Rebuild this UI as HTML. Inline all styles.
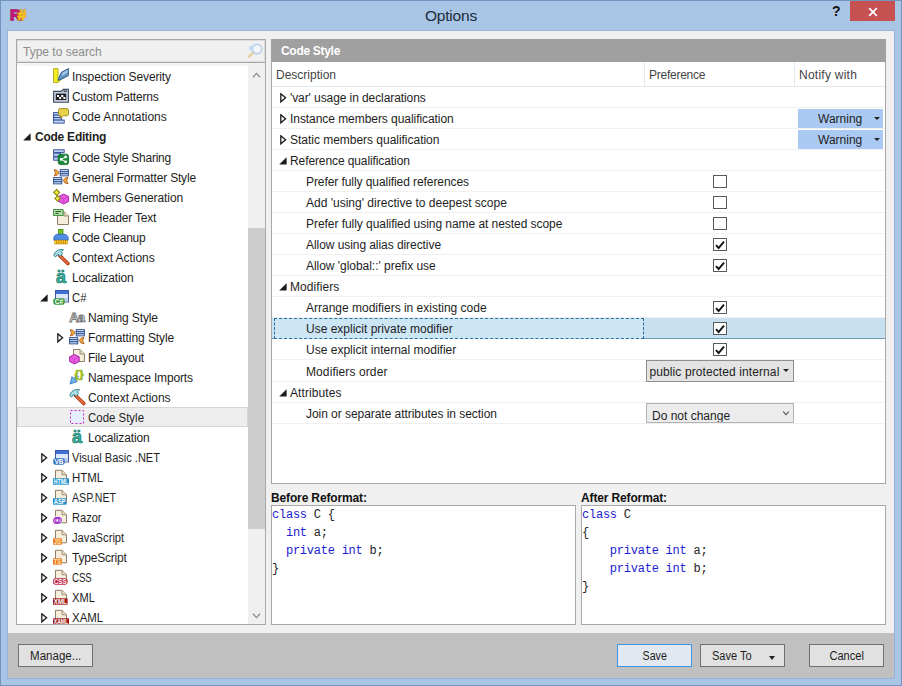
<!DOCTYPE html>
<html><head><meta charset="utf-8"><title>Options</title>
<style>
html,body{margin:0;padding:0;}
body{width:902px;height:686px;overflow:hidden;background:#a9c5e5;font-family:"Liberation Sans",sans-serif;font-size:12px;color:#1e1e1e;}
#win{position:relative;width:902px;height:686px;background:#a9c5e5;box-shadow:inset 0 0 0 1px #6f94bd;overflow:hidden;}
#titlebar{position:absolute;left:0;top:0;width:902px;height:31px;}
#logo{position:absolute;left:10px;top:4.5px;font-weight:bold;font-size:15.5px;letter-spacing:-3.6px;line-height:20px;paint-order:stroke fill;}
#logo .lr{color:#c9187a;-webkit-text-stroke:1.3px #a0125c;}
#logo .lh{color:#f7c624;-webkit-text-stroke:1.3px #d89a18;}
#title{position:absolute;left:0;width:902px;top:6px;text-align:center;font-size:15.5px;line-height:20px;color:#1c2a3a;letter-spacing:-0.2px;}
#help{position:absolute;left:832px;top:3px;font-weight:bold;font-size:14px;line-height:16px;color:#111;}
#close{position:absolute;left:850px;top:1px;width:45px;height:20px;background:#c75050;}
#close svg{position:absolute;left:18px;top:5.6px;}
#contentbg{position:absolute;left:8px;top:31px;width:886px;height:602px;background:#f0f0f0;}
#frame{position:absolute;left:7px;top:30px;width:888px;height:649px;box-sizing:border-box;border:1px solid #97b4d6;}
#bar{position:absolute;left:8px;top:633px;width:886px;height:45px;background:#c0c0c0;}
#content{position:absolute;left:0;top:0;width:902px;height:686px;}
#search{position:absolute;left:16px;top:39px;width:250px;height:24px;box-sizing:border-box;border:1px solid #a8a8a8;background:#f0f0f0;box-shadow:inset 0 0 0 1px #dcdcdc;}
#ph{position:absolute;left:6px;top:4px;line-height:16px;color:#8c8c8c;}
#search svg{position:absolute;left:229px;top:3px;}
#tree{position:absolute;left:16px;top:62px;width:250px;height:563px;box-sizing:border-box;border:1px solid #a8a8a8;background:#fff;overflow:hidden;}
#treeinner{position:absolute;left:0;top:0;width:231px;height:561px;overflow:hidden;}
.trow{position:absolute;left:0;width:231px;height:20px;}
.trow.sel{background:#eeeeee;box-shadow:inset 0 0 0 1px #d6d6d6;}
.tt{position:absolute;top:3px;line-height:16px;white-space:nowrap;}
.ico{position:absolute;top:2px;width:16px;height:16px;}
.ico svg{display:block;overflow:visible;}
.arw{position:absolute;line-height:0;}
#sb{position:absolute;left:231px;top:0;width:17px;height:561px;background:#f0f0f0;}
#thumb{position:absolute;left:0;top:165px;width:17px;height:301px;background:#cdcdcd;}
#band{position:absolute;left:0;top:0;width:231px;height:3px;background:#f4f4f4;}
#hdr{position:absolute;left:271px;top:39px;width:615px;height:23px;z-index:2;background:#a0a0a0;color:#fff;font-weight:bold;}
#hdr span{position:absolute;left:10px;top:4px;line-height:16px;letter-spacing:-0.3px;}
#table{position:absolute;left:271px;top:61px;width:615px;height:423px;box-sizing:border-box;border:1px solid #a8a8a8;border-top-color:#a0a0a0;background:#fff;overflow:hidden;}
#thead{position:absolute;left:0;top:0;width:613px;height:25px;border-bottom:1px solid #e4e9ef;box-sizing:border-box;}
.th{position:absolute;top:5px;line-height:16px;color:#444;white-space:nowrap;}
.vs{position:absolute;top:0;width:1px;height:24px;background:#e4e9ef;}
.r{position:absolute;left:0;width:613px;box-sizing:border-box;border-bottom:1px solid #f0f0f0;}
.r.rsel{background:#c8e1f0;border-bottom-color:#6f9db5;}
.rt{position:absolute;top:3px;line-height:16px;white-space:nowrap;}
.focus{position:absolute;left:2px;top:0;width:370px;height:21px;box-sizing:border-box;border:1px dashed #2d6f9f;background:#cce6f6;}
.cb{position:absolute;left:441px;top:4px;width:14px;height:13px;box-sizing:border-box;border:1px solid #5a5a5a;background:#fff;}
.cb svg{left:-1px !important;top:-1px !important;}
.warn{position:absolute;left:526px;top:1px;width:85px;height:19px;background:#aacaf4;}
.wt{position:absolute;left:20px;top:2px;line-height:16px;}
.wa{position:absolute;left:76px;top:8px;width:0;height:0;border-left:3.2px solid transparent;border-right:3.2px solid transparent;border-top:3.4px solid #222;}
.combo1{position:absolute;left:374px;top:0;width:148px;height:22px;box-sizing:border-box;border:1px solid #8e8e8e;background:#e3e3e3;}
.ct{position:absolute;left:2.5px;top:3px;line-height:16px;white-space:nowrap;letter-spacing:0.1px;}
.combo2{position:absolute;left:374px;top:0;width:148px;height:20px;box-sizing:border-box;border:1px solid #b4b4b4;background:#ececec;overflow:hidden;}
.ct2{position:absolute;left:5px;top:4px;line-height:16px;white-space:nowrap;}
.lbl{position:absolute;top:490px;line-height:16px;font-weight:bold;color:#111;white-space:nowrap;letter-spacing:-0.14px;}
.codebox{position:absolute;top:505px;height:118px;border:1px solid #a8a8a8;background:#fff;font-family:"Liberation Mono",monospace;font-size:12px;letter-spacing:-0.24px;color:#222;}
.cl{position:relative;left:0px;top:0px;height:18px;line-height:18px;white-space:pre;}
.k{color:#1c1cd0;}
.btn{position:absolute;top:11px;height:23px;box-sizing:border-box;border:1px solid #707070;background:#e1e1e1;text-align:center;line-height:22px;white-space:nowrap;}
.btn span{line-height:22px;}
.bt{display:inline-block;}
.btn.def{border-color:#3c96e8;background:#e1e8f0;}
#bar .wa{position:absolute;}

</style></head>
<body>
<div id="win">
 <div id="titlebar">
  <span id="logo"><span class="lr">R</span><span class="lh">#</span></span>
  <span id="title">Options</span>
  <span id="help">?</span>
  <span id="close"><svg width="10" height="10" viewBox="0 0 10 10"><path d="M1.2 1.2L8.8 8.8M8.8 1.2L1.2 8.8" stroke="#fff" stroke-width="1.7"/></svg></span>
 </div>
 <div id="frame"></div><div id="contentbg"></div>
 <div id="content">
  <div id="search"><span id="ph">Type to search</span><svg width="18" height="16" viewBox="0 0 18 16"><path d="M7.2 9.3L3 13.6" stroke="#e6d19c" stroke-width="2.6" stroke-linecap="round"/><circle cx="11" cy="6" r="4.7" fill="#f2f6fb" stroke="#bdd3ea" stroke-width="1.7"/><circle cx="5.3" cy="5.2" r="2.2" fill="#c3daf3"/></svg></div>
  <div id="tree">
   <div id="treeinner"><div id="band"></div>
<div class="trow" style="top:3px"><span class="ico" style="left:36px"><svg width="16" height="16" viewBox="0 0 16 16"><path d="M0.6 0.6H5V9.8L7.6 12.2L5.2 14.6H0.6Z" fill="#f6ee22" stroke="#b5ab1e" stroke-width="1"/><path d="M4.6 12.4L8.4 4.2L15.4 0.6V7.6L8.6 11.2Z" fill="#5b93c4" stroke="#2f5478" stroke-width="0.9"/><path d="M9.5 4.8L14.6 1.8V4.5L8.6 8.2Z" fill="#a9c8e4"/></svg></span><span class="tt" id="t0" style="left:55px;letter-spacing:-0.131px;">Inspection Severity</span></div>
<div class="trow" style="top:23px"><span class="ico" style="left:36px"><svg width="16" height="16" viewBox="0 0 16 16"><path d="M0.6 3.4H8.2L10.2 1.4H15.4V14.2H0.6Z" fill="#c4cfde" stroke="#3f4b60" stroke-width="1.1"/><rect x="2.8" y="5.6" width="10.4" height="6.4" fill="#1d1d22"/><rect x="4" y="7" width="2.1" height="2" fill="#fff"/><rect x="8.2" y="7" width="2.1" height="2" fill="#fff"/><rect x="6.1" y="9" width="2.1" height="2" fill="#fff"/><rect x="10.3" y="9" width="2.1" height="2" fill="#fff"/><path d="M10.5 3.2H14" stroke="#2a3242" stroke-width="1.2"/></svg></span><span class="tt" id="t1" style="left:55px;letter-spacing:-0.185px;">Custom Patterns</span></div>
<div class="trow" style="top:43px"><span class="ico" style="left:36px"><svg width="16" height="16" viewBox="0 0 16 16"><rect x="0.6" y="4.6" width="5" height="2.5" fill="#bfd8f8" stroke="#2b4590" stroke-width="0.9"/><rect x="0.6" y="7.1" width="6.5" height="2.5" fill="#bfd8f8" stroke="#2b4590" stroke-width="0.9"/><rect x="0.6" y="9.6" width="8" height="2.5" fill="#bfd8f8" stroke="#2b4590" stroke-width="0.9"/><rect x="0.6" y="12.1" width="10.6" height="3" fill="#bfd8f8" stroke="#2b4590" stroke-width="0.9"/><path d="M7 0.6H14Q15.5 0.6 15.5 2.2V6.2Q15.5 7.8 14 7.8H10.5L7.4 10.6L8 7.8H7Q5.5 7.8 5.5 6.2V2.2Q5.5 0.6 7 0.6Z" fill="#e8d24a" stroke="#9d8a28" stroke-width="0.9"/></svg></span><span class="tt" id="t2" style="left:55px;letter-spacing:0.003px;">Code Annotations</span></div>
<div class="trow" style="top:63px"><span class="arw" style="left:6px;top:7px"><svg class="ar" width="8" height="8" viewBox="0 0 8 8"><path d="M7.6 0.2V7.6H0.2Z" fill="#1a1a1a"/></svg></span><span class="tt" id="t3" style="font-weight:bold;left:18px;letter-spacing:-0.242px;">Code Editing</span></div>
<div class="trow" style="top:84px"><span class="ico" style="left:36px"><svg width="16" height="16" viewBox="0 0 16 16"><rect x="0.6" y="0.8" width="10.6" height="2.6" fill="#bfd8f8" stroke="#2b4590" stroke-width="0.9"/><rect x="0.6" y="4.2" width="7" height="3" fill="#bfd8f8" stroke="#2b4590" stroke-width="0.9"/><rect x="0.6" y="8.2" width="5" height="3" fill="#bfd8f8" stroke="#2b4590" stroke-width="0.9"/><rect x="5.2" y="5.2" width="10.4" height="10.4" rx="2.4" fill="#1a8a3c" stroke="#0f6a2a" stroke-width="0.8"/><path d="M8.2 10.4L12.6 8M8.2 10.4L12.6 12.8" stroke="#fff" stroke-width="1"/><circle cx="8.2" cy="10.4" r="1.4" fill="#fff"/><circle cx="12.6" cy="8" r="1.4" fill="#fff"/><circle cx="12.6" cy="12.8" r="1.4" fill="#fff"/></svg></span><span class="tt" id="t4" style="left:55px;letter-spacing:-0.250px;">Code Style Sharing</span></div>
<div class="trow" style="top:104px"><span class="ico" style="left:36px"><svg width="16" height="16" viewBox="0 0 16 16"><path d="M1.2 0.8C4.2 0.8 5.6000000000000005 2.3 5.6000000000000005 3.8C5.6000000000000005 5.3 4.2 6.8 1.2 6.8Q3.8 3.8 1.2 0.8Z" fill="#f5a838" stroke="#a85a18" stroke-width="0.9"/><rect x="7.2" y="0.6" width="8.2" height="2.1" fill="#c9dcf6" stroke="#2b4a8a" stroke-width="0.9"/><rect x="7.2" y="2.7" width="8.2" height="2.1" fill="#c9dcf6" stroke="#2b4a8a" stroke-width="0.9"/><rect x="7.2" y="4.8" width="8.2" height="2.1" fill="#c9dcf6" stroke="#2b4a8a" stroke-width="0.9"/><rect x="0.6" y="8.6" width="8.2" height="2.1" fill="#c9dcf6" stroke="#2b4a8a" stroke-width="0.9"/><rect x="0.6" y="10.7" width="8.2" height="2.1" fill="#c9dcf6" stroke="#2b4a8a" stroke-width="0.9"/><rect x="0.6" y="12.8" width="8.2" height="2.1" fill="#c9dcf6" stroke="#2b4a8a" stroke-width="0.9"/><path d="M15 8.6C12 8.6 10.6 10.1 10.6 11.6C10.6 13.1 12 14.6 15 14.6Q12.4 11.6 15 8.6Z" fill="#f5a838" stroke="#a85a18" stroke-width="0.9"/></svg></span><span class="tt" id="t5" style="left:55px;letter-spacing:-0.180px;">General Formatter Style</span></div>
<div class="trow" style="top:124px"><span class="ico" style="left:36px"><svg width="16" height="16" viewBox="0 0 16 16"><path d="M10.6 5L15.6 7.5V12.5L10.6 15L5.6 12.5V7.5Z" fill="#e85ae0" stroke="#a020a0" stroke-width="0.9"/><path d="M5.6 7.5L10.6 10.0L15.6 7.5M10.6 10.0V15" stroke="#c23cc0" stroke-width="0.7" fill="none"/><path d="M3.6 0.2999999999999998L4.995 2.005L6.7 3.4L4.995 4.795L3.6 6.5L2.205 4.795L0.5 3.4L2.205 2.005Z" fill="#f4ee3a" stroke="#8f8a18" stroke-width="1.1" stroke-linejoin="round"/><path d="M4.6 6.5L5.904999999999999 8.095L7.5 9.4L5.904999999999999 10.705L4.6 12.3L3.295 10.705L1.6999999999999997 9.4L3.295 8.095Z" fill="#f4ee3a" stroke="#8f8a18" stroke-width="1.1" stroke-linejoin="round"/></svg></span><span class="tt" id="t6" style="left:55px;letter-spacing:-0.090px;">Members Generation</span></div>
<div class="trow" style="top:144px"><span class="ico" style="left:36px"><svg width="16" height="16" viewBox="0 0 16 16"><path d="M4.5 2.5H11.0L15.5 7.0V15.5H4.5Z" fill="#f6eedd" stroke="#8f7f66" stroke-width="1"/><path d="M11.0 2.5V7.0H15.5" fill="#e4d8c0" stroke="#8f7f66" stroke-width="0.8"/><rect x="0.6" y="0.6" width="9.4" height="5.8" fill="#b9e3ac" stroke="#3c8a3c" stroke-width="1"/><path d="M2.4 2.6H8M2.4 4.4H5.6" stroke="#2a5a2a" stroke-width="1"/></svg></span><span class="tt" id="t7" style="left:55px;letter-spacing:-0.185px;">File Header Text</span></div>
<div class="trow" style="top:164px"><span class="ico" style="left:36px"><svg width="16" height="16" viewBox="0 0 16 16"><rect x="5.6" y="0.4" width="4.4" height="6.4" fill="#7ac41e" stroke="#3f8a10" stroke-width="0.8"/><path d="M0.8 11.2V9.6Q0.8 5.6 5 5.2H11Q15.2 5.6 15.2 9.6V11.2Z" fill="#4f8fe6" stroke="#2a62b8" stroke-width="0.8"/><rect x="1.8" y="11.2" width="12.4" height="3.8" fill="#f9d820" stroke="#c08010" stroke-width="0.6"/><path d="M3.6 11.4V15M5.8 11.4V15M8 11.4V15M10.2 11.4V15M12.4 11.4V15" stroke="#c87810" stroke-width="0.9"/></svg></span><span class="tt" id="t8" style="left:55px;letter-spacing:-0.286px;">Code Cleanup</span></div>
<div class="trow" style="top:184px"><span class="ico" style="left:36px"><svg width="16" height="16" viewBox="0 0 16 16"><path d="M6.6 6.4L14.8 14.6" stroke="#a83a1a" stroke-width="3.6" stroke-linecap="round"/><path d="M6.8 6.6L14.6 14.4" stroke="#e86a3a" stroke-width="2" stroke-linecap="round"/><path d="M0.8 6.6Q1.4 2.6 5.4 1Q8.2 0 10.6 0.8L8.4 2.6L9.6 4.6L7 7.4L5.4 5.6Q3.6 5.4 2.6 8Z" fill="#a9dde6" stroke="#2f7f8a" stroke-width="0.9"/></svg></span><span class="tt" id="t9" style="left:55px;letter-spacing:-0.053px;">Context Actions</span></div>
<div class="trow" style="top:204px"><span class="ico" style="left:36px"><svg width="16" height="16" viewBox="0 0 16 16"><text x="8" y="14.4" text-anchor="middle" font-family="Liberation Sans, sans-serif" font-weight="bold" font-size="18" fill="#3ab0a0" stroke="#127868" stroke-width="0.7">ä</text></svg></span><span class="tt" id="t10" style="left:55px;letter-spacing:-0.148px;">Localization</span></div>
<div class="trow" style="top:224px"><span class="arw" style="left:23px;top:7px"><svg class="ar" width="8" height="8" viewBox="0 0 8 8"><path d="M7.6 0.2V7.6H0.2Z" fill="#1a1a1a"/></svg></span><span class="ico" style="left:36px"><svg width="16" height="16" viewBox="0 0 16 16"><rect x="2.5" y="1.5" width="13" height="11.5" fill="#dfe8f8" stroke="#3f56a0" stroke-width="1"/><rect x="3" y="2" width="12" height="3" fill="#3f6fd8"/><path d="M3 9H15V12.5H3Z" fill="#b9cdf2"/><rect x="0.3" y="9.3" width="11.4" height="6.4" rx="2" fill="#3a9a3a"/><text x="6" y="14.7" text-anchor="middle" font-family="Liberation Sans, sans-serif" font-weight="bold" font-size="6.6" fill="#fff">C#</text></svg></span><span class="tt" id="t11" style="left:55px;display:inline-block;transform-origin:0 0;transform:scaleX(0.9385);">C#</span></div>
<div class="trow" style="top:244px"><span class="ico" style="left:52px"><svg width="16" height="16" viewBox="0 0 16 16"><text x="0.2" y="12.6" font-family="Liberation Sans, sans-serif" font-weight="bold" font-size="13" letter-spacing="-0.8" fill="#ffffff" stroke="#6e6e6e" stroke-width="0.85">Aa</text></svg></span><span class="tt" id="t12" style="left:71px;letter-spacing:-0.123px;">Naming Style</span></div>
<div class="trow" style="top:264px"><span class="arw" style="left:40px;top:6px"><svg class="ar" width="8" height="12" viewBox="0 0 8 12"><path d="M0.8 0.8L5.6 4.8L0.8 8.8Z" fill="none" stroke="#1a1a1a" stroke-width="1.3"/></svg></span><span class="ico" style="left:52px"><svg width="16" height="16" viewBox="0 0 16 16"><path d="M1.2 0.8C4.2 0.8 5.6000000000000005 2.3 5.6000000000000005 3.8C5.6000000000000005 5.3 4.2 6.8 1.2 6.8Q3.8 3.8 1.2 0.8Z" fill="#f5a838" stroke="#a85a18" stroke-width="0.9"/><rect x="7.2" y="0.6" width="8.2" height="2.1" fill="#c9dcf6" stroke="#2b4a8a" stroke-width="0.9"/><rect x="7.2" y="2.7" width="8.2" height="2.1" fill="#c9dcf6" stroke="#2b4a8a" stroke-width="0.9"/><rect x="7.2" y="4.8" width="8.2" height="2.1" fill="#c9dcf6" stroke="#2b4a8a" stroke-width="0.9"/><rect x="0.6" y="8.6" width="8.2" height="2.1" fill="#c9dcf6" stroke="#2b4a8a" stroke-width="0.9"/><rect x="0.6" y="10.7" width="8.2" height="2.1" fill="#c9dcf6" stroke="#2b4a8a" stroke-width="0.9"/><rect x="0.6" y="12.8" width="8.2" height="2.1" fill="#c9dcf6" stroke="#2b4a8a" stroke-width="0.9"/><path d="M15 8.6C12 8.6 10.6 10.1 10.6 11.6C10.6 13.1 12 14.6 15 14.6Q12.4 11.6 15 8.6Z" fill="#f5a838" stroke="#a85a18" stroke-width="0.9"/></svg></span><span class="tt" id="t13" style="left:71px;letter-spacing:-0.073px;">Formatting Style</span></div>
<div class="trow" style="top:284px"><span class="ico" style="left:52px"><svg width="16" height="16" viewBox="0 0 16 16"><path d="M4.5 0.5H11.0L15.5 5.0V12.5H4.5Z" fill="#f6eedd" stroke="#8f7f66" stroke-width="1"/><path d="M11.0 0.5V5.0H15.5" fill="#e4d8c0" stroke="#8f7f66" stroke-width="0.8"/><path d="M5.3999999999999995 5.4L10.2 7.800000000000001V12.6L5.3999999999999995 15.0L0.6 12.6V7.800000000000001Z" fill="#e85ae0" stroke="#a020a0" stroke-width="0.9"/><path d="M0.6 7.800000000000001L5.3999999999999995 10.2L10.2 7.800000000000001M5.3999999999999995 10.2V15.0" stroke="#c23cc0" stroke-width="0.7" fill="none"/></svg></span><span class="tt" id="t14" style="left:71px;letter-spacing:-0.255px;">File Layout</span></div>
<div class="trow" style="top:304px"><span class="ico" style="left:52px"><svg width="16" height="16" viewBox="0 0 16 16"><path d="M9.4 7.6L6.4 10.8L8.2 12.6L1 15L3 7.6L4.8 9.4L8 6.2Z" fill="#6fb2ee" stroke="#2f6fc0" stroke-width="0.8"/><text x="10.4" y="8.8" text-anchor="middle" font-family="Liberation Sans, sans-serif" font-weight="bold" font-size="10.5" letter-spacing="0.6" fill="#c4e020" stroke="#8aa810" stroke-width="0.7">{}</text></svg></span><span class="tt" id="t15" style="left:71px;letter-spacing:-0.146px;">Namespace Imports</span></div>
<div class="trow" style="top:324px"><span class="ico" style="left:52px"><svg width="16" height="16" viewBox="0 0 16 16"><path d="M6.6 6.4L14.8 14.6" stroke="#a83a1a" stroke-width="3.6" stroke-linecap="round"/><path d="M6.8 6.6L14.6 14.4" stroke="#e86a3a" stroke-width="2" stroke-linecap="round"/><path d="M0.8 6.6Q1.4 2.6 5.4 1Q8.2 0 10.6 0.8L8.4 2.6L9.6 4.6L7 7.4L5.4 5.6Q3.6 5.4 2.6 8Z" fill="#a9dde6" stroke="#2f7f8a" stroke-width="0.9"/></svg></span><span class="tt" id="t16" style="left:71px;letter-spacing:-0.059px;">Context Actions</span></div>
<div class="trow sel" style="top:344px"><span class="ico" style="left:52px"><svg width="16" height="16" viewBox="0 0 16 16"><rect x="1.5" y="1.5" width="13" height="13" fill="#e4eefc" stroke="#c828c8" stroke-width="1" stroke-dasharray="2 2"/></svg></span><span class="tt" id="t17" style="left:71px;display:inline-block;transform-origin:0 0;transform:scaleX(0.9540);">Code Style</span></div>
<div class="trow" style="top:364px"><span class="ico" style="left:52px"><svg width="16" height="16" viewBox="0 0 16 16"><text x="8" y="14.4" text-anchor="middle" font-family="Liberation Sans, sans-serif" font-weight="bold" font-size="18" fill="#3ab0a0" stroke="#127868" stroke-width="0.7">ä</text></svg></span><span class="tt" id="t18" style="left:71px;letter-spacing:-0.165px;">Localization</span></div>
<div class="trow" style="top:384px"><span class="arw" style="left:24px;top:6px"><svg class="ar" width="8" height="12" viewBox="0 0 8 12"><path d="M0.8 0.8L5.6 4.8L0.8 8.8Z" fill="none" stroke="#1a1a1a" stroke-width="1.3"/></svg></span><span class="ico" style="left:36px"><svg width="16" height="16" viewBox="0 0 16 16"><rect x="2.5" y="1.5" width="13" height="11.5" fill="#dfe8f8" stroke="#3f56a0" stroke-width="1"/><rect x="3" y="2" width="12" height="3" fill="#3f6fd8"/><path d="M3 9H15V12.5H3Z" fill="#b9cdf2"/><rect x="0.3" y="9.3" width="11.4" height="6.4" rx="2" fill="#2f6fc0"/><text x="6" y="14.7" text-anchor="middle" font-family="Liberation Sans, sans-serif" font-weight="bold" font-size="6.6" fill="#fff">VB</text></svg></span><span class="tt" id="t19" style="left:55px;display:inline-block;transform-origin:0 0;transform:scaleX(0.9174);">Visual Basic .NET</span></div>
<div class="trow" style="top:404px"><span class="arw" style="left:24px;top:6px"><svg class="ar" width="8" height="12" viewBox="0 0 8 12"><path d="M0.8 0.8L5.6 4.8L0.8 8.8Z" fill="none" stroke="#1a1a1a" stroke-width="1.3"/></svg></span><span class="ico" style="left:36px"><svg width="16" height="16" viewBox="0 0 16 16"><path d="M2.5 1.3H9.0L13.5 5.8V13.8H2.5Z" fill="#f6eedd" stroke="#8f7f66" stroke-width="1"/><path d="M9.0 1.3V5.8H13.5" fill="#e4d8c0" stroke="#8f7f66" stroke-width="0.8"/><rect x="0" y="9.3" width="16" height="6.4" rx="0" fill="#1f8fd0"/><text x="0.8" y="15.1" textLength="14.4" lengthAdjust="spacingAndGlyphs" font-family="Liberation Sans, sans-serif" font-weight="bold" font-size="7" fill="#fff">HTML</text></svg></span><span class="tt" id="t20" style="left:55px;display:inline-block;transform-origin:0 0;transform:scaleX(0.9549);">HTML</span></div>
<div class="trow" style="top:424px"><span class="arw" style="left:24px;top:6px"><svg class="ar" width="8" height="12" viewBox="0 0 8 12"><path d="M0.8 0.8L5.6 4.8L0.8 8.8Z" fill="none" stroke="#1a1a1a" stroke-width="1.3"/></svg></span><span class="ico" style="left:36px"><svg width="16" height="16" viewBox="0 0 16 16"><path d="M2.5 1.3H9.0L13.5 5.8V13.8H2.5Z" fill="#f6eedd" stroke="#8f7f66" stroke-width="1"/><path d="M9.0 1.3V5.8H13.5" fill="#e4d8c0" stroke="#8f7f66" stroke-width="0.8"/><rect x="0" y="9.3" width="13.4" height="6.4" rx="0" fill="#1f8fd0"/><text x="0.8" y="15.1" textLength="11.8" lengthAdjust="spacingAndGlyphs" font-family="Liberation Sans, sans-serif" font-weight="bold" font-size="7" fill="#fff">ASP</text></svg></span><span class="tt" id="t21" style="left:55px;display:inline-block;transform-origin:0 0;transform:scaleX(0.8833);">ASP.NET</span></div>
<div class="trow" style="top:444px"><span class="arw" style="left:24px;top:6px"><svg class="ar" width="8" height="12" viewBox="0 0 8 12"><path d="M0.8 0.8L5.6 4.8L0.8 8.8Z" fill="none" stroke="#1a1a1a" stroke-width="1.3"/></svg></span><span class="ico" style="left:36px"><svg width="16" height="16" viewBox="0 0 16 16"><path d="M2.5 1.3H9.0L13.5 5.8V13.8H2.5Z" fill="#f6eedd" stroke="#8f7f66" stroke-width="1"/><path d="M9.0 1.3V5.8H13.5" fill="#e4d8c0" stroke="#8f7f66" stroke-width="0.8"/><circle cx="4.4" cy="11.4" r="4.4" fill="#fff"/><text x="4.5" y="14.2" text-anchor="middle" font-family="Liberation Sans, sans-serif" font-weight="bold" font-size="9.6" fill="#a020c8" stroke="#a020c8" stroke-width="0.35">@</text></svg></span><span class="tt" id="t22" style="left:55px;display:inline-block;transform-origin:0 0;transform:scaleX(0.9214);">Razor</span></div>
<div class="trow" style="top:464px"><span class="arw" style="left:24px;top:6px"><svg class="ar" width="8" height="12" viewBox="0 0 8 12"><path d="M0.8 0.8L5.6 4.8L0.8 8.8Z" fill="none" stroke="#1a1a1a" stroke-width="1.3"/></svg></span><span class="ico" style="left:36px"><svg width="16" height="16" viewBox="0 0 16 16"><path d="M2.5 1.3H9.0L13.5 5.8V13.8H2.5Z" fill="#f6eedd" stroke="#8f7f66" stroke-width="1"/><path d="M9.0 1.3V5.8H13.5" fill="#e4d8c0" stroke="#8f7f66" stroke-width="0.8"/><rect x="0" y="9.3" width="8.8" height="6.4" rx="0" fill="#ec7a22"/><text x="0.8" y="15.1" textLength="7.200000000000001" lengthAdjust="spacingAndGlyphs" font-family="Liberation Sans, sans-serif" font-weight="bold" font-size="7" fill="#ffe6b0">JS</text></svg></span><span class="tt" id="t23" style="left:55px;display:inline-block;transform-origin:0 0;transform:scaleX(0.9316);">JavaScript</span></div>
<div class="trow" style="top:484px"><span class="arw" style="left:24px;top:6px"><svg class="ar" width="8" height="12" viewBox="0 0 8 12"><path d="M0.8 0.8L5.6 4.8L0.8 8.8Z" fill="none" stroke="#1a1a1a" stroke-width="1.3"/></svg></span><span class="ico" style="left:36px"><svg width="16" height="16" viewBox="0 0 16 16"><path d="M2.5 1.3H9.0L13.5 5.8V13.8H2.5Z" fill="#f6eedd" stroke="#8f7f66" stroke-width="1"/><path d="M9.0 1.3V5.8H13.5" fill="#e4d8c0" stroke="#8f7f66" stroke-width="0.8"/><rect x="0" y="9.3" width="8.8" height="6.4" rx="0" fill="#ec7a22"/><text x="0.8" y="15.1" textLength="7.200000000000001" lengthAdjust="spacingAndGlyphs" font-family="Liberation Sans, sans-serif" font-weight="bold" font-size="7" fill="#ffe6b0">TS</text></svg></span><span class="tt" id="t24" style="left:55px;letter-spacing:-0.210px;">TypeScript</span></div>
<div class="trow" style="top:504px"><span class="arw" style="left:24px;top:6px"><svg class="ar" width="8" height="12" viewBox="0 0 8 12"><path d="M0.8 0.8L5.6 4.8L0.8 8.8Z" fill="none" stroke="#1a1a1a" stroke-width="1.3"/></svg></span><span class="ico" style="left:36px"><svg width="16" height="16" viewBox="0 0 16 16"><path d="M2.5 1.3H9.0L13.5 5.8V13.8H2.5Z" fill="#f6eedd" stroke="#8f7f66" stroke-width="1"/><path d="M9.0 1.3V5.8H13.5" fill="#e4d8c0" stroke="#8f7f66" stroke-width="0.8"/><rect x="0" y="9.3" width="14.6" height="6.4" rx="2.4" fill="#b82040"/><text x="0.8" y="15.1" textLength="13.0" lengthAdjust="spacingAndGlyphs" font-family="Liberation Sans, sans-serif" font-weight="bold" font-size="7" fill="#fff">CSS</text></svg></span><span class="tt" id="t25" style="left:55px;display:inline-block;transform-origin:0 0;transform:scaleX(0.8020);">CSS</span></div>
<div class="trow" style="top:524px"><span class="arw" style="left:24px;top:6px"><svg class="ar" width="8" height="12" viewBox="0 0 8 12"><path d="M0.8 0.8L5.6 4.8L0.8 8.8Z" fill="none" stroke="#1a1a1a" stroke-width="1.3"/></svg></span><span class="ico" style="left:36px"><svg width="16" height="16" viewBox="0 0 16 16"><path d="M2.5 1.3H9.0L13.5 5.8V13.8H2.5Z" fill="#f6eedd" stroke="#8f7f66" stroke-width="1"/><path d="M9.0 1.3V5.8H13.5" fill="#e4d8c0" stroke="#8f7f66" stroke-width="0.8"/><rect x="0" y="9.3" width="14.6" height="6.4" rx="0" fill="#a01818"/><text x="0.8" y="15.1" textLength="13.0" lengthAdjust="spacingAndGlyphs" font-family="Liberation Sans, sans-serif" font-weight="bold" font-size="7" fill="#fff">XML</text></svg></span><span class="tt" id="t26" style="left:55px;display:inline-block;transform-origin:0 0;transform:scaleX(0.9316);">XML</span></div>
<div class="trow" style="top:544px"><span class="arw" style="left:24px;top:6px"><svg class="ar" width="8" height="12" viewBox="0 0 8 12"><path d="M0.8 0.8L5.6 4.8L0.8 8.8Z" fill="none" stroke="#1a1a1a" stroke-width="1.3"/></svg></span><span class="ico" style="left:36px"><svg width="16" height="16" viewBox="0 0 16 16"><path d="M2.5 1.3H9.0L13.5 5.8V13.8H2.5Z" fill="#f6eedd" stroke="#8f7f66" stroke-width="1"/><path d="M9.0 1.3V5.8H13.5" fill="#e4d8c0" stroke="#8f7f66" stroke-width="0.8"/><rect x="0" y="9.3" width="16" height="6.4" rx="0" fill="#a01818"/><text x="0.8" y="15.1" textLength="14.4" lengthAdjust="spacingAndGlyphs" font-family="Liberation Sans, sans-serif" font-weight="bold" font-size="7" fill="#fff">XAML</text></svg></span><span class="tt" id="t27" style="left:55px;display:inline-block;transform-origin:0 0;transform:scaleX(0.9545);">XAML</span></div>
   </div>
   <div id="sb"><svg width="9" height="6" viewBox="0 0 9 6" style="position:absolute;left:4px;top:8.5px"><path d="M1 5.2L4.5 1.4L8 5.2" fill="none" stroke="#8a8a8a" stroke-width="1.3"/></svg><div id="thumb"></div><svg width="9" height="6" viewBox="0 0 9 6" style="position:absolute;left:4px;top:550px"><path d="M1 0.8L4.5 4.6L8 0.8" fill="none" stroke="#8a8a8a" stroke-width="1.3"/></svg></div>
  </div>
  <div id="hdr"><span>Code Style</span></div>
  <div id="table">
   <div id="thead"><span class="th" style="left:4px">Description</span><span class="th" style="left:377px;letter-spacing:-0.25px">Preference</span><span class="th" style="left:527px;letter-spacing:0.25px">Notify with</span>
    <i class="vs" style="left:372px"></i><i class="vs" style="left:522px"></i></div>
<div class="r" style="top:25px;height:21px"><span class="arw" style="left:8px;top:6px"><svg class="ar" width="8" height="12" viewBox="0 0 8 12"><path d="M0.8 0.8L5.6 4.8L0.8 8.8Z" fill="none" stroke="#1a1a1a" stroke-width="1.3"/></svg></span><span class="rt" id="r0" style="left:18px;letter-spacing:-0.085px;">'var' usage in declarations</span></div>
<div class="r" style="top:46px;height:21px"><span class="arw" style="left:8px;top:6px"><svg class="ar" width="8" height="12" viewBox="0 0 8 12"><path d="M0.8 0.8L5.6 4.8L0.8 8.8Z" fill="none" stroke="#1a1a1a" stroke-width="1.3"/></svg></span><span class="rt" id="r1" style="left:18px;letter-spacing:-0.057px;">Instance members qualification</span><span class="warn"><span class="wt">Warning</span><span class="wa"></span></span></div>
<div class="r" style="top:67px;height:21px"><span class="arw" style="left:8px;top:6px"><svg class="ar" width="8" height="12" viewBox="0 0 8 12"><path d="M0.8 0.8L5.6 4.8L0.8 8.8Z" fill="none" stroke="#1a1a1a" stroke-width="1.3"/></svg></span><span class="rt" id="r2" style="left:18px;letter-spacing:-0.024px;">Static members qualification</span><span class="warn"><span class="wt">Warning</span><span class="wa"></span></span></div>
<div class="r" style="top:88px;height:21px"><span class="arw" style="left:6.5px;top:7.4px"><svg class="ar" width="8" height="8" viewBox="0 0 8 8"><path d="M7.6 0.2V7.6H0.2Z" fill="#1a1a1a"/></svg></span><span class="rt" id="r3" style="left:18px;letter-spacing:-0.099px;">Reference qualification</span></div>
<div class="r" style="top:109px;height:21px"><span class="rt" id="r4" style="left:34px;letter-spacing:-0.073px;">Prefer fully qualified references</span><span class="cb"></span></div>
<div class="r" style="top:130px;height:21px"><span class="rt" id="r5" style="left:34px;letter-spacing:0.005px;">Add 'using' directive to deepest scope</span><span class="cb"></span></div>
<div class="r" style="top:151px;height:21px"><span class="rt" id="r6" style="left:34px;letter-spacing:-0.050px;">Prefer fully qualified using name at nested scope</span><span class="cb"></span></div>
<div class="r" style="top:172px;height:21px"><span class="rt" id="r7" style="left:34px;letter-spacing:-0.064px;">Allow using alias directive</span><span class="cb"><svg width="14" height="14" viewBox="0 0 14 14" style="position:absolute;left:0;top:0"><path d="M3 7.2L5.6 10L11 3.6" fill="none" stroke="#111" stroke-width="1.9"/></svg></span></div>
<div class="r" style="top:193px;height:21px"><span class="rt" id="r8" style="left:34px;letter-spacing:-0.035px;">Allow 'global::' prefix use</span><span class="cb"><svg width="14" height="14" viewBox="0 0 14 14" style="position:absolute;left:0;top:0"><path d="M3 7.2L5.6 10L11 3.6" fill="none" stroke="#111" stroke-width="1.9"/></svg></span></div>
<div class="r" style="top:214px;height:21px"><span class="arw" style="left:6.5px;top:7.4px"><svg class="ar" width="8" height="8" viewBox="0 0 8 8"><path d="M7.6 0.2V7.6H0.2Z" fill="#1a1a1a"/></svg></span><span class="rt" id="r9" style="left:18px;letter-spacing:0.068px;">Modifiers</span></div>
<div class="r" style="top:235px;height:21px"><span class="rt" id="r10" style="left:34px;letter-spacing:-0.005px;">Arrange modifiers in existing code</span><span class="cb"><svg width="14" height="14" viewBox="0 0 14 14" style="position:absolute;left:0;top:0"><path d="M3 7.2L5.6 10L11 3.6" fill="none" stroke="#111" stroke-width="1.9"/></svg></span></div>
<div class="r rsel" style="top:256px;height:21px"><span class="focus"></span><span class="rt" id="r11" style="left:34px;letter-spacing:-0.001px;">Use explicit private modifier</span><span class="cb"><svg width="14" height="14" viewBox="0 0 14 14" style="position:absolute;left:0;top:0"><path d="M3 7.2L5.6 10L11 3.6" fill="none" stroke="#111" stroke-width="1.9"/></svg></span></div>
<div class="r" style="top:277px;height:21px"><span class="rt" id="r12" style="left:34px;letter-spacing:0.008px;">Use explicit internal modifier</span><span class="cb"><svg width="14" height="14" viewBox="0 0 14 14" style="position:absolute;left:0;top:0"><path d="M3 7.2L5.6 10L11 3.6" fill="none" stroke="#111" stroke-width="1.9"/></svg></span></div>
<div class="r" style="top:298px;height:22px"><span class="rt" id="r13" style="left:34px;top:4px;letter-spacing:0.098px;">Modifiers order</span><span class="combo1"><span class="ct">public protected internal</span><span class="wa" style="left:136px;top:8px"></span></span></div>
<div class="r" style="top:320px;height:21px"><span class="arw" style="left:6.5px;top:7.4px"><svg class="ar" width="8" height="8" viewBox="0 0 8 8"><path d="M7.6 0.2V7.6H0.2Z" fill="#1a1a1a"/></svg></span><span class="rt" id="r14" style="left:18px;letter-spacing:0.090px;">Attributes</span></div>
<div class="r" style="top:341px;height:21px"><span class="rt" id="r15" style="left:34px;letter-spacing:-0.050px;">Join or separate attributes in section</span><span class="combo2"><span class="ct2">Do not change</span><svg width="8" height="5" viewBox="0 0 8 5" style="position:absolute;left:135px;top:7px"><path d="M1.2 0.7L4 3.6L6.8 0.7" fill="none" stroke="#555" stroke-width="1.1"/></svg></span></div>
  </div>
  <div class="lbl" style="left:271px">Before Reformat:</div>
  <div class="lbl" style="left:581px">After Reformat:</div>
  <div class="codebox" style="left:271px;width:303px"><div class="cl"><span class="k">class</span> C {</div>
<div class="cl">  <span class="k">int</span> a;</div>
<div class="cl">  <span class="k">private</span> <span class="k">int</span> b;</div>
<div class="cl">}</div></div>
  <div class="codebox" style="left:581px;width:303px"><div class="cl"><span class="k">class</span> C</div>
<div class="cl">{</div>
<div class="cl">    <span class="k">private</span> <span class="k">int</span> a;</div>
<div class="cl">    <span class="k">private</span> <span class="k">int</span> b;</div>
<div class="cl">}</div></div>
 </div>
 <div id="bar">
  <span class="btn" style="left:10px;width:75px"><span class="bt" style="transform:scaleX(0.96)">Manage...</span></span>
  <span class="btn def" style="left:609px;width:75px"><span class="bt" style="transform:scaleX(0.89)">Save</span></span>
  <span class="btn" style="left:692px;width:85px"><span class="bt" style="position:absolute;left:11px;top:0;transform-origin:0 50%;transform:scaleX(0.92)">Save To</span><span class="wa" style="left:68px;top:11px;border-left-width:3.6px;border-right-width:3.6px;border-top-width:4px"></span></span>
  <span class="btn" style="left:801px;width:75px"><span class="bt" style="transform:scaleX(0.92)">Cancel</span></span>
 </div>
</div>
</body></html>
